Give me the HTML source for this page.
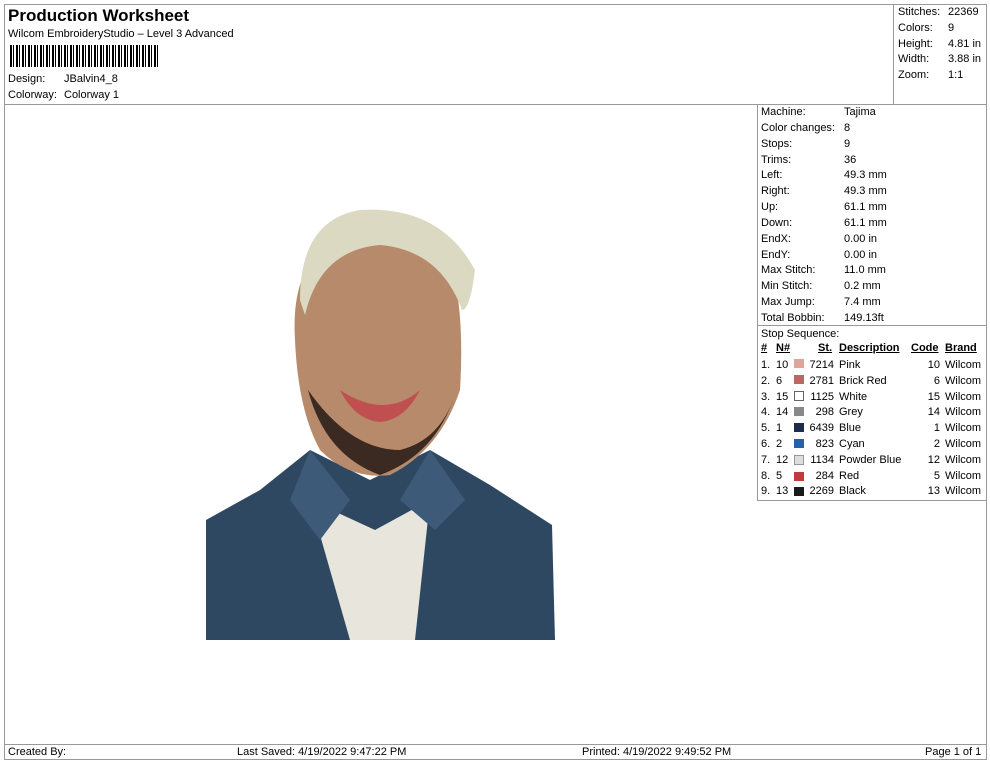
<!DOCTYPE html>
<html><head><style>
body{margin:0;width:990px;height:762px;background:#fff;font-family:"Liberation Sans",sans-serif;color:#000;position:relative;overflow:hidden}
.a{position:absolute;white-space:nowrap;font-size:11px}
.l{position:absolute;background:#999}
</style></head><body>
<div class="l" style="left:4px;top:4px;width:982px;height:1px"></div>
<div class="l" style="left:4px;top:4px;width:1px;height:756px"></div>
<div class="l" style="left:986px;top:4px;width:1px;height:756px"></div>
<div class="l" style="left:4px;top:759px;width:982px;height:1px"></div>
<div class="l" style="left:4px;top:104px;width:982px;height:1px"></div>
<div class="l" style="left:893px;top:4px;width:1px;height:100px"></div>
<div class="l" style="left:757px;top:104px;width:1px;height:396px"></div>
<div class="l" style="left:757px;top:325px;width:229px;height:1px"></div>
<div class="l" style="left:757px;top:500px;width:229px;height:1px"></div>
<div class="l" style="left:4px;top:744px;width:982px;height:1px"></div>
<div class="a" style="left:8px;top:6px;font-size:17px;font-weight:bold">Production Worksheet</div>
<div class="a" style="left:8px;top:28px">Wilcom EmbroideryStudio – Level 3 Advanced</div>
<div style="position:absolute;left:10px;top:45px;width:148px;height:22px;background:repeating-linear-gradient(90deg,#000 0 2px,#fff 2px 3px,#000 3px 4px,#fff 4px 6px)"></div>
<div class="a" style="left:8px;top:73px">Design:</div><div class="a" style="left:64px;top:73px">JBalvin4_8</div>
<div class="a" style="left:8px;top:89px">Colorway:</div><div class="a" style="left:64px;top:89px">Colorway 1</div>
<div class="a" style="left:898px;top:5px;line-height:15.8px">Stitches:<br>Colors:<br>Height:<br>Width:<br>Zoom:</div>
<div class="a" style="left:948px;top:5px;line-height:15.8px">22369<br>9<br>4.81 in<br>3.88 in<br>1:1</div>
<div class="a" style="left:761px;top:105px;line-height:15.85px">Machine:<br>Color changes:<br>Stops:<br>Trims:<br>Left:<br>Right:<br>Up:<br>Down:<br>EndX:<br>EndY:<br>Max Stitch:<br>Min Stitch:<br>Max Jump:<br>Total Bobbin:<br>Stop Sequence:</div>
<div class="a" style="left:844px;top:105px;line-height:15.85px">Tajima<br>8<br>9<br>36<br>49.3 mm<br>49.3 mm<br>61.1 mm<br>61.1 mm<br>0.00 in<br>0.00 in<br>11.0 mm<br>0.2 mm<br>7.4 mm<br>149.13ft</div>
<div class="a" style="left:761px;top:342px;font-weight:bold;text-decoration:underline">#</div>
<div class="a" style="left:776px;top:342px;font-weight:bold;text-decoration:underline">N#</div>
<div class="a" style="left:818px;top:342px;font-weight:bold;text-decoration:underline">St.</div>
<div class="a" style="left:839px;top:342px;font-weight:bold;text-decoration:underline">Description</div>
<div class="a" style="left:911px;top:342px;font-weight:bold;text-decoration:underline">Code</div>
<div class="a" style="left:945px;top:342px;font-weight:bold;text-decoration:underline">Brand</div>
<div class="a" style="left:761px;top:358px;line-height:15.8px">1.<br>2.<br>3.<br>4.<br>5.<br>6.<br>7.<br>8.<br>9.</div>
<div class="a" style="left:776px;top:358px;line-height:15.8px">10<br>6<br>15<br>14<br>1<br>2<br>12<br>5<br>13</div>
<div class="a" style="left:806px;top:358px;line-height:15.8px;text-align:right;width:28px">7214<br>2781<br>1125<br>298<br>6439<br>823<br>1134<br>284<br>2269</div>
<div class="a" style="left:839px;top:358px;line-height:15.8px">Pink<br>Brick Red<br>White<br>Grey<br>Blue<br>Cyan<br>Powder Blue<br>Red<br>Black</div>
<div class="a" style="left:915px;top:358px;line-height:15.8px;text-align:right;width:25px">10<br>6<br>15<br>14<br>1<br>2<br>12<br>5<br>13</div>
<div class="a" style="left:945px;top:358px;line-height:15.8px">Wilcom<br>Wilcom<br>Wilcom<br>Wilcom<br>Wilcom<br>Wilcom<br>Wilcom<br>Wilcom<br>Wilcom</div>
<div style="position:absolute;left:794px;top:359px;width:10px">
<div style="height:9px;margin-bottom:6.8px;background:#e0a49a"></div>
<div style="height:9px;margin-bottom:6.8px;background:#b86a62"></div>
<div style="height:8px;margin-bottom:6.8px;border:1px solid #666;width:8px;background:#fff"></div>
<div style="height:9px;margin-bottom:6.8px;background:#888"></div>
<div style="height:9px;margin-bottom:6.8px;background:#1c2b4e"></div>
<div style="height:9px;margin-bottom:6.8px;background:#2660a8"></div>
<div style="height:8px;margin-bottom:6.8px;border:1px solid #999;width:8px;background:#ddd"></div>
<div style="height:9px;margin-bottom:6.8px;background:#c03a3a"></div>
<div style="height:9px;background:#1a1a1a"></div></div>
<svg style="position:absolute;left:200px;top:200px" width="360" height="445">
<path d="M6 320 L60 290 L110 250 L170 280 L230 250 L290 285 L352 325 L355 440 L6 440Z" fill="#2f4862"/>
<path d="M110 300 L150 440 L215 440 L230 300 L175 330Z" fill="#e8e6dc"/>
<path d="M95 140 Q90 60 140 40 Q200 20 250 60 Q265 110 260 190 Q240 250 190 275 Q150 280 120 250 Q98 210 95 140Z" fill="#b78a6c"/>
<path d="M108 190 Q125 255 180 275 Q235 255 255 195 Q240 240 200 250 Q150 250 108 190Z" fill="#3a2a22"/>
<path d="M140 190 Q185 220 220 190 Q205 220 180 222 Q155 220 140 190Z" fill="#c05050"/>
<path d="M100 100 Q100 20 160 10 Q240 5 275 70 Q270 110 262 110 Q240 50 180 45 Q120 50 105 115Z" fill="#dcd9c2"/>
<path d="M110 250 L150 300 L120 340 L90 300Z" fill="#3d5a78"/>
<path d="M230 250 L200 300 L235 330 L265 300Z" fill="#3d5a78"/>
</svg>
<div class="a" style="left:8px;top:746px">Created By:</div>
<div class="a" style="left:237px;top:746px">Last Saved: 4/19/2022 9:47:22 PM</div>
<div class="a" style="left:582px;top:746px">Printed: 4/19/2022 9:49:52 PM</div>
<div class="a" style="left:925px;top:746px">Page 1 of 1</div>
</body></html>
